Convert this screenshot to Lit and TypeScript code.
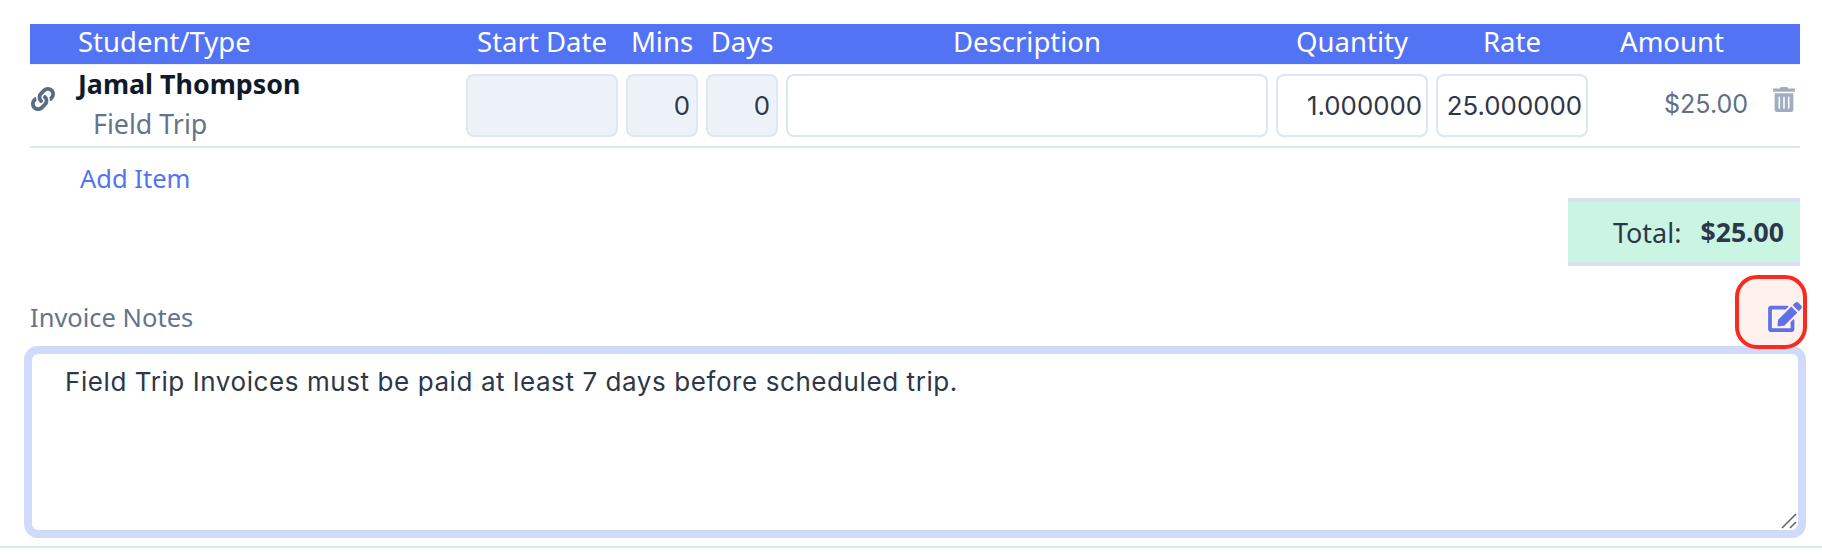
import { html, css, LitElement, svg } from "lit";
import { customElement } from "lit/decorators.js";

const linkIcon = svg`<path d="M326.612 185.391c59.747 59.809 58.927 155.698.36 214.59-.11.12-.24.25-.36.37l-67.2 67.2c-59.27 59.27-155.699 59.262-214.96 0-59.27-59.26-59.27-155.7 0-214.96l37.106-37.106c9.84-9.84 26.786-3.3 27.294 10.606.648 17.722 3.826 35.527 9.69 52.721 1.986 5.822.567 12.262-3.783 16.612l-13.087 13.087c-28.026 28.026-28.905 73.66-1.155 101.96 28.024 28.579 74.086 28.749 102.325.51l67.2-67.19c28.191-28.191 28.073-73.757 0-101.83-3.701-3.694-7.429-6.564-10.341-8.569a16.037 16.037 0 0 1-6.947-12.606c-.396-10.567 3.348-21.456 11.698-29.806l21.054-21.055c5.521-5.521 14.182-6.199 20.584-1.731a152.482 152.482 0 0 1 20.522 17.197zM467.547 44.449c-59.261-59.262-155.69-59.27-214.96 0l-67.2 67.2c-.12.12-.25.25-.36.37-58.566 58.892-59.387 154.781.36 214.59a152.454 152.454 0 0 0 20.521 17.196c6.402 4.468 15.064 3.789 20.584-1.731l21.054-21.055c8.35-8.35 12.094-19.239 11.698-29.806a16.037 16.037 0 0 0-6.947-12.606c-2.912-2.005-6.64-4.875-10.341-8.569-28.073-28.073-28.191-73.639 0-101.83l67.2-67.19c28.239-28.239 74.3-28.069 102.325.51 27.75 28.3 26.872 73.934-1.155 101.96l-13.087 13.087c-4.35 4.35-5.769 10.79-3.783 16.612 5.864 17.194 9.042 34.999 9.69 52.721.509 13.906 17.454 20.446 27.294 10.606l37.106-37.106c59.271-59.259 59.271-155.699.001-214.959z"/>`;
const trashIcon = svg`<path d="M32 464a48 48 0 0 0 48 48h288a48 48 0 0 0 48-48V128H32zm272-256a16 16 0 0 1 32 0v224a16 16 0 0 1-32 0zm-96 0a16 16 0 0 1 32 0v224a16 16 0 0 1-32 0zm-96 0a16 16 0 0 1 32 0v224a16 16 0 0 1-32 0zM432 32H312l-9.4-18.7A24 24 0 0 0 281.1 0H166.8a23.72 23.72 0 0 0-21.4 13.3L136 32H16A16 16 0 0 0 0 48v32a16 16 0 0 0 16 16h416a16 16 0 0 0 16-16V48a16 16 0 0 0-16-16z"/>`;
const editIcon = svg`<path d="M402.6 83.2l90.2 90.2c3.8 3.8 3.8 10 0 13.8L274.4 405.6l-92.8 10.3c-12.4 1.4-22.9-9.1-21.5-21.5l10.3-92.8L388.8 83.2c3.8-3.8 10-3.8 13.8 0zm162-22.9l-48.8-48.8c-15.2-15.2-39.9-15.2-55.2 0l-35.4 35.4c-3.8 3.8-3.8 10 0 13.8l90.2 90.2c3.8 3.8 10 3.8 13.8 0l35.4-35.4c15.2-15.3 15.2-40 0-55.2zM384 346.2V448H64V128h229.8c3.2 0 6.2-1.3 8.5-3.5l40-40c7.6-7.6 2.2-20.5-8.5-20.5H48C21.5 64 0 85.5 0 112v352c0 26.5 21.5 48 48 48h352c26.5 0 48-21.5 48-48V306.2c0-10.7-12.9-16-20.5-8.5l-40 40c-2.2 2.3-3.5 5.3-3.5 8.5z"/>`;

@customElement("app-root")
export class AppRoot extends LitElement {
  static styles = css`
    :host {
      display: block;
      background: #ffffff;
      font-family: "Noto Sans", "Open Sans", sans-serif;
      color: #2d3748;
    }

    .page {
      padding: 24px 16px 8px 24px;
    }

    .table {
      margin-left: 6px;
      margin-right: 6px;
    }

    .cols {
      display: grid;
      grid-template-columns: 428px 152px 72px 72px 482px 152px 152px 152px 44px;
      column-gap: 8px;
    }

    .head {
      height: 40px;
      background: #5373f5;
      color: #ffffff;
      font-size: 27.5px;
      line-height: 36px;
      text-align: center;
      white-space: nowrap;
      border-bottom: 1px solid #edf2f7;
    }

    .head .student {
      padding-left: 48px;
      text-align: left;
    }

    .row {
      height: 83px;
      box-sizing: border-box;
      padding-top: 9px;
      border-bottom: 2px solid #dde6f1;
    }

    .who {
      display: flex;
      align-items: flex-start;
      height: 63px;
    }

    .link {
      width: 24px;
      height: 24px;
      fill: #5a6b82;
      flex: none;
      margin-left: 1px;
      margin-top: 13px;
    }

    .names {
      margin-left: 23px;
      margin-top: -7px;
      white-space: nowrap;
    }

    .name {
      font-size: 26.8px;
      font-weight: 700;
      line-height: 34px;
      color: #0f1a2b;
    }

    .type {
      font-size: 26.8px;
      line-height: 46px;
      color: #64748b;
      padding-left: 15px;
    }

    input {
      width: 100%;
      height: 63px;
      box-sizing: border-box;
      border: 2px solid #dde6f1;
      border-radius: 8px;
      background: #ffffff;
      padding: 0 4px;
      font-family: "Inter", "Liberation Sans", sans-serif;
      font-size: 25.8px;
      color: #2d3748;
      text-align: right;
      outline: none;
    }

    input.off {
      background: #edf1f8;
      padding-right: 6px;
    }

    .amount {
      height: 63px;
      line-height: 61px;
      text-align: right;
      font-family: "Inter", "Liberation Sans", sans-serif;
      font-size: 25px;
      color: #5f6f85;
    }

    .trash {
      display: flex;
      justify-content: flex-start;
      padding-left: 17px;
      padding-top: 13px;
    }

    .trash svg {
      width: 22px;
      height: 25px;
      fill: #a0aec0;
    }

    .add {
      display: block;
      margin: 14px 0 0 50px;
      font-size: 25.5px;
      line-height: 32px;
      color: #5373f5;
    }

    .total-wrap {
      display: flex;
      justify-content: flex-end;
      margin-top: 4px;
    }

    .total {
      width: 232px;
      height: 68px;
      box-sizing: border-box;
      display: flex;
      justify-content: flex-end;
      align-items: center;
      gap: 19px;
      padding-right: 16px;
      background: #caf5e2;
      border-top: 4px solid #d8e0ee;
      border-bottom: 4px solid #d8e0ee;
      font-size: 27px;
      color: #2d3748;
    }

    .total b {
      font-size: 26.6px;
      font-weight: 700;
    }

    .notes-head {
      display: flex;
      justify-content: space-between;
      align-items: center;
      margin: 9px -1px -3px 6px;
      position: relative;
      z-index: 1;
    }

    .notes-label {
      font-size: 25.5px;
      color: #64748b;
      margin-top: 9px;
    }

    .edit {
      width: 72px;
      height: 74px;
      box-sizing: border-box;
      display: flex;
      align-items: flex-end;
      justify-content: flex-end;
      padding: 0 1px 13px 0;
      background: #fff1ee;
      border: 4px solid #fb2a1e;
      border-radius: 22px;
    }

    .edit svg {
      width: 34px;
      height: 30px;
      fill: #5f70e8;
    }

    .notes {
      position: relative;
    }

    textarea {
      display: block;
      width: 100%;
      height: 192px;
      box-sizing: border-box;
      border: 8px solid #d0daf9;
      border-radius: 14px;
      padding: 13px 33px;
      background: #ffffff;
      font-family: "Inter", "Liberation Sans", sans-serif;
      font-size: 26px;
      letter-spacing: 0.58px;
      line-height: 30px;
      color: #2d3748;
      outline: none;
      resize: none;
    }

    .grip {
      position: absolute;
      right: 9px;
      bottom: 9px;
      width: 16px;
      height: 16px;
      stroke: #666666;
      stroke-width: 1.6;
    }

    .rule {
      height: 2px;
      background: #dde6f1;
    }
  `;

  render() {
    return html`
      <div class="page">
        <div class="table">
          <div class="cols head">
            <div class="student">Student/Type</div>
            <div>Start Date</div>
            <div>Mins</div>
            <div>Days</div>
            <div>Description</div>
            <div>Quantity</div>
            <div>Rate</div>
            <div>Amount</div>
            <div></div>
          </div>
          <div class="cols row">
            <div class="who">
              <svg class="link" viewBox="0 0 512 512">${linkIcon}</svg>
              <div class="names">
                <div class="name">Jamal Thompson</div>
                <div class="type">Field Trip</div>
              </div>
            </div>
            <input class="off" readonly value="" />
            <input class="off" readonly value="0" />
            <input class="off" readonly value="0" />
            <input readonly value="" />
            <input readonly value="1.000000" />
            <input readonly value="25.000000" />
            <div class="amount">$25.00</div>
            <div class="trash"><svg viewBox="0 0 448 512">${trashIcon}</svg></div>
          </div>
          <a class="add">Add Item</a>
          <div class="total-wrap">
            <div class="total"><span>Total:</span><b>$25.00</b></div>
          </div>
        </div>
        <div class="notes-head">
          <span class="notes-label">Invoice Notes</span>
          <div class="edit"><svg viewBox="0 0 576 512">${editIcon}</svg></div>
        </div>
        <div class="notes">
          <textarea readonly>Field Trip Invoices must be paid at least 7 days before scheduled trip.</textarea>
          <svg class="grip" viewBox="0 0 16 16">
            <line x1="1" y1="15" x2="15" y2="1" />
            <line x1="9" y1="15" x2="15" y2="9" />
          </svg>
        </div>
      </div>
      <div class="rule"></div>
    `;
  }
}
